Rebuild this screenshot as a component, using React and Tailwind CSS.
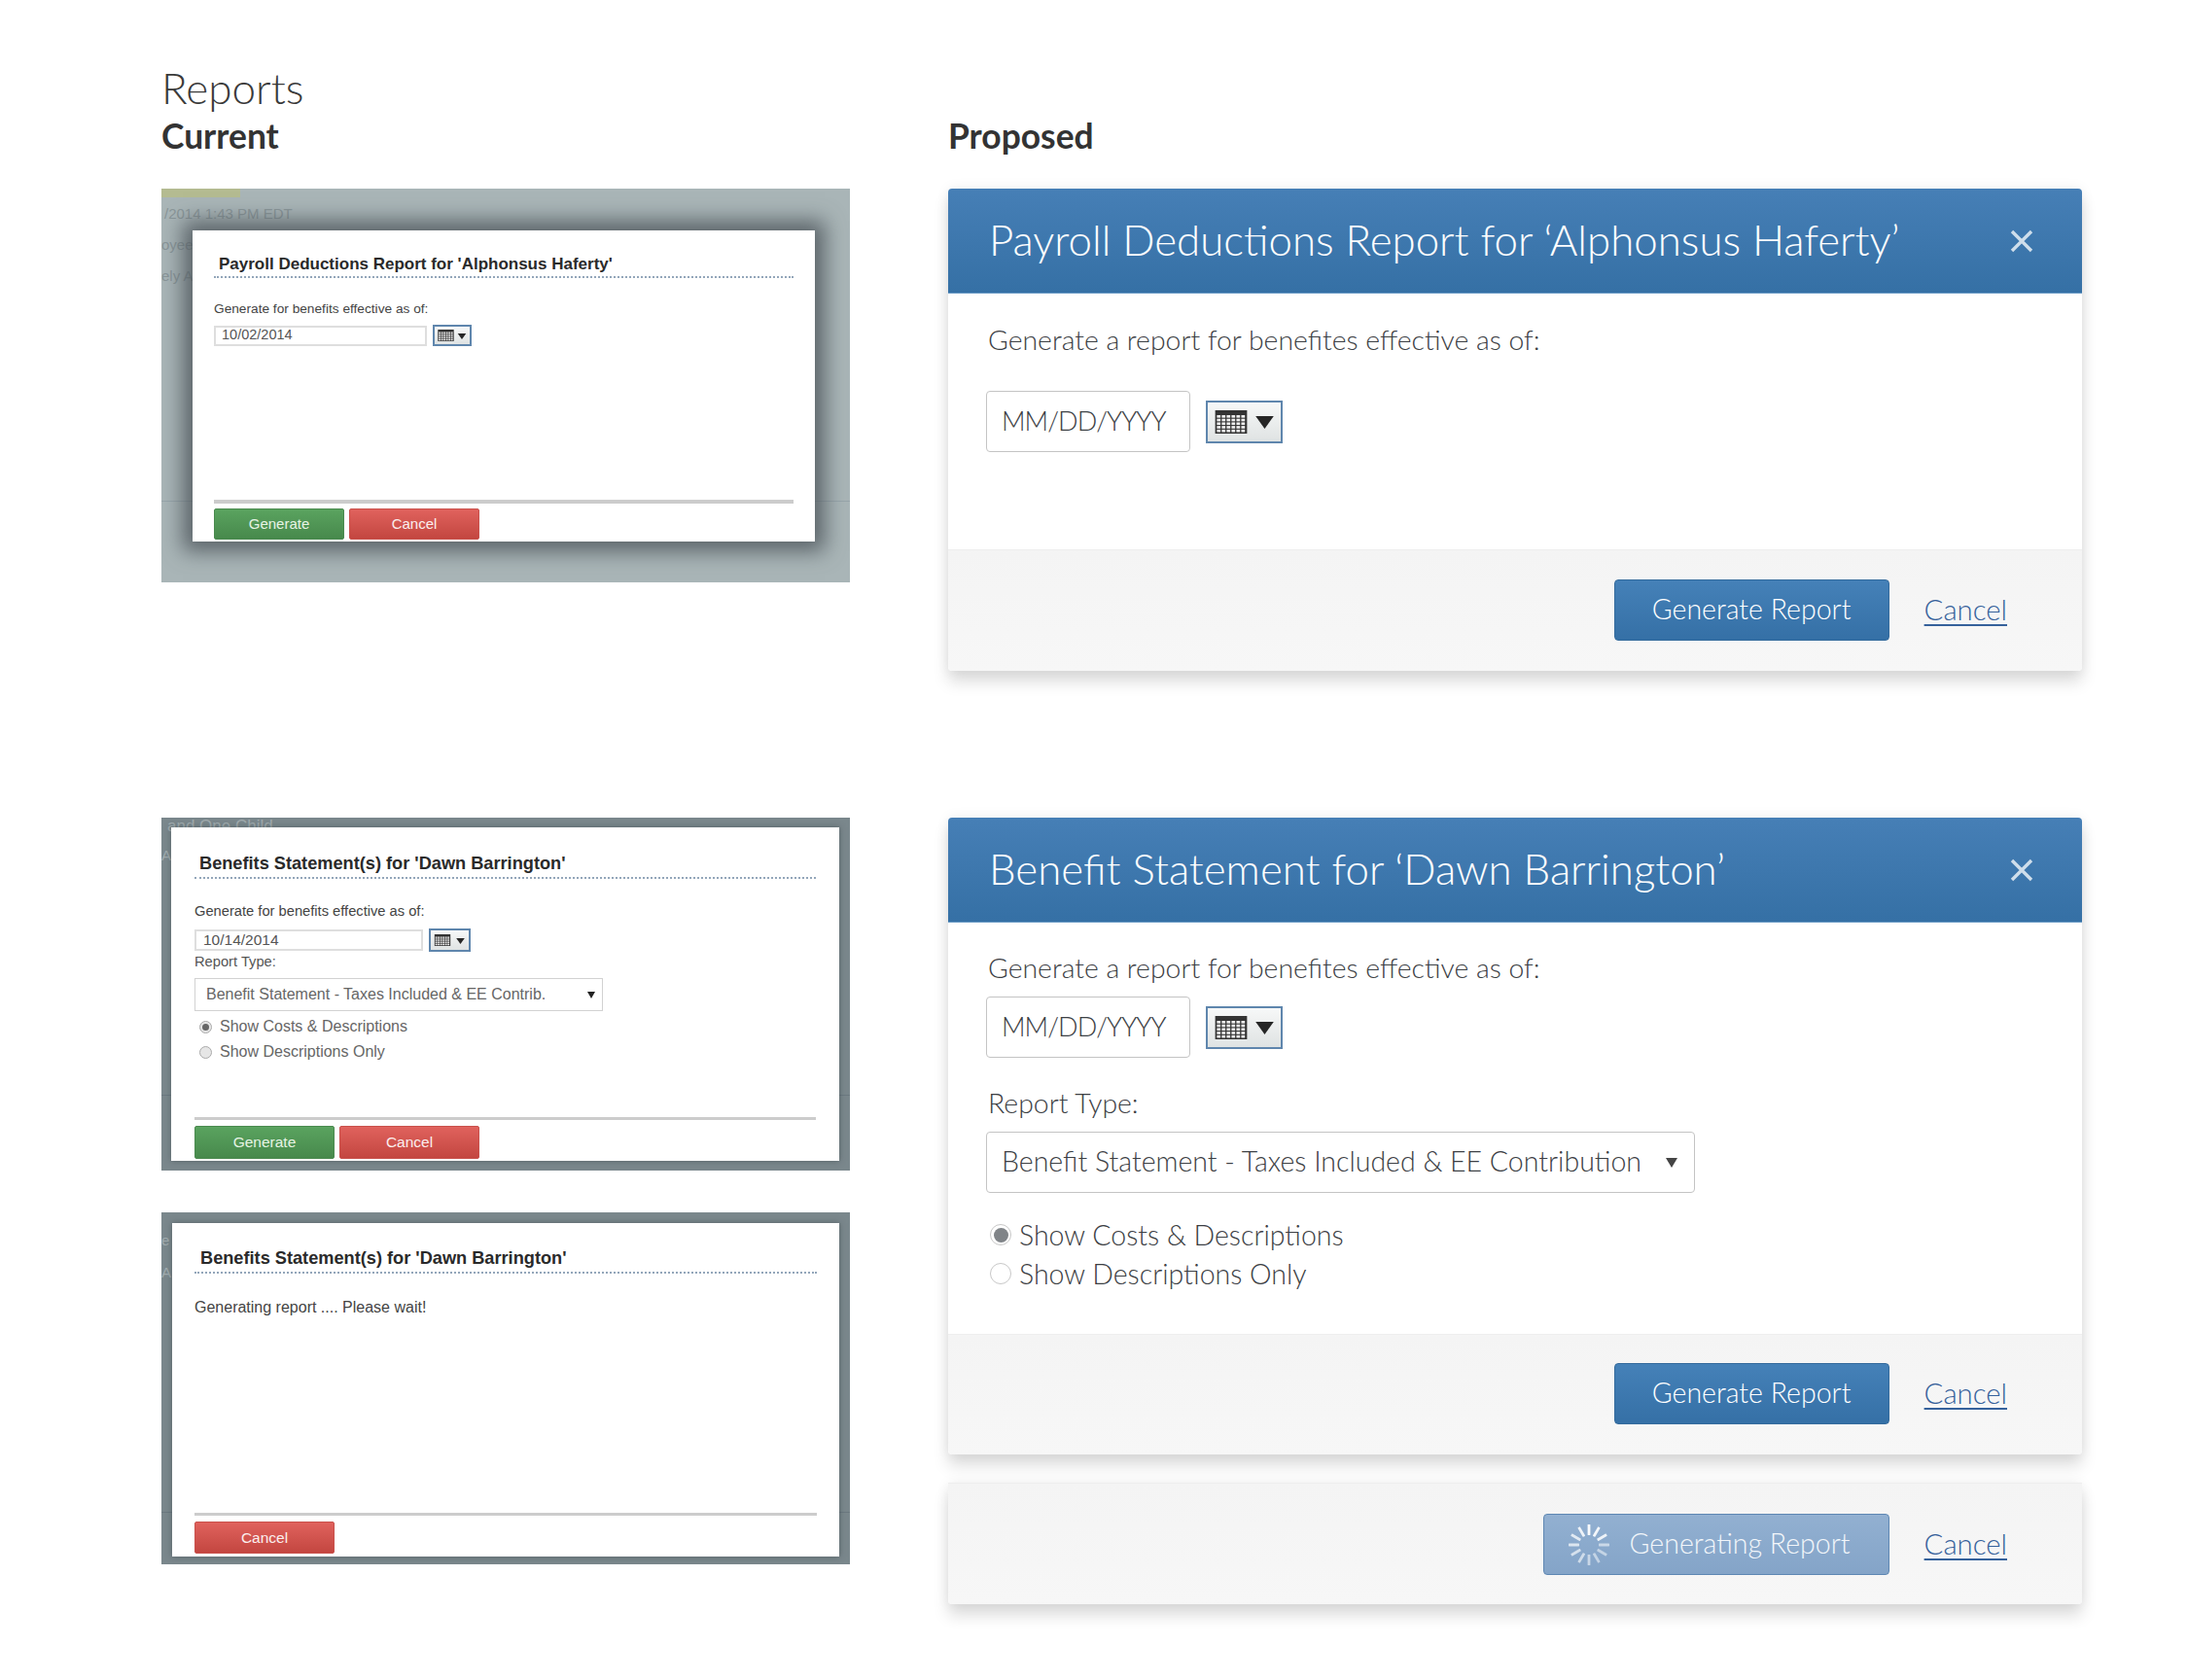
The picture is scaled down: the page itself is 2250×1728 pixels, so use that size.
import React from "react";

const lato = "font-['Lato',sans-serif] font-light";
const arial = "font-['Liberation_Sans',Arial,sans-serif]";

function CalIcon({ w = 30, h = 22 }) {
  const cells = [];
  for (let r = 0; r < 5; r++) {
    for (let c = 0; c < 6; c++) {
      cells.push(<rect key={r + "-" + c} x={1.6 + c * 4.6} y={4.6 + r * 3.4} width={3.4} height={2.4} fill="#f0f0f0" />);
    }
  }
  return (
    <svg width={w} height={h} viewBox="0 0 30 22" className="block">
      <rect x="0" y="0" width="30" height="22" fill="#333" />
      {cells}
    </svg>
  );
}

function CalButton({ className, iconW, iconH, triW, triH, gap }) {
  return (
    <div className={"flex items-center justify-center border-2 border-[#5f86ad] bg-gradient-to-b from-[#f7f8f8] to-[#dfe3e3] " + className} style={{ gap }}>
      <CalIcon w={iconW} h={iconH} />
      <svg width={triW} height={triH} viewBox="0 0 10 7" className="mt-[2px] block">
        <path d="M0 0H10L5 7Z" fill="#262626" />
      </svg>
    </div>
  );
}

function OldButton({ color, w, h, size, children }) {
  const c =
    color === "green"
      ? "from-[#5aa35f] to-[#47894c] border-[#4a8a4f] text-[#e6f3e4]"
      : "from-[#e0625d] to-[#c34640] border-[#c9504b] text-[#fbeeee]";
  return (
    <div className={"flex items-center justify-center rounded-[2px] border bg-gradient-to-b " + c + " " + w + " " + h + " " + size}>{children}</div>
  );
}

function Radio({ checked, old }) {
  if (old) {
    return (
      <span className="flex h-[13px] w-[13px] items-center justify-center rounded-full border border-[#aaa] bg-[#e6e6e6]">
        {checked && <span className="h-[7px] w-[7px] rounded-full bg-[#666]" />}
      </span>
    );
  }
  return (
    <span className="flex h-[22px] w-[22px] items-center justify-center rounded-full border border-[#c8c8c8] bg-white">
      {checked && <span className="h-[15px] w-[15px] rounded-full bg-[#808488]" />}
    </span>
  );
}

function Footer({ spinner, cls }) {
  return (
    <div className={"flex items-start justify-end gap-[36px] rounded-b-[4px] border-t border-[#eeeeee] bg-gradient-to-b from-[#f4f4f4] to-[#f7f7f7] pr-[77px] " + cls}>
      {spinner ? (
        <div className="flex h-[63px] w-[356px] items-center rounded-[4px] border border-[#5e87b3] bg-gradient-to-b from-[#92b0d1] to-[#84a4c8] pl-[24px]">
          <svg width="44" height="44" viewBox="-22 -22 44 44" className="block">
            {Array.from({ length: 12 }).map((_, i) => (
              <rect key={i} x="-1.4" y="-21" width="2.8" height="11" rx="0.6" fill="#fff" opacity={[0.95, 0.9, 0.85, 0.55, 0.5, 0.5, 0.55, 0.6, 0.65, 0.7, 0.75, 0.85][i]} transform={"rotate(" + i * 30 + ")"} />
            ))}
          </svg>
          <span className={lato + " mb-[2px] ml-[20px] whitespace-nowrap text-[28.5px] text-[#f2f6fa]"}>Generating Report</span>
        </div>
      ) : (
        <div className="flex h-[63px] w-[283px] items-center justify-center rounded-[4px] border border-[#336a9c] bg-gradient-to-b from-[#4581b8] to-[#3570a6]">
          <span className={lato + " mb-[2px] whitespace-nowrap text-[28.5px] text-white"}>Generate Report</span>
        </div>
      )}
      <span className={lato + " flex h-[61px] items-center text-[29.3px] text-[#35619b] underline underline-offset-[4px]"}>Cancel</span>
    </div>
  );
}

function DialogHeader({ title }) {
  return (
    <div className="flex h-[108px] items-center justify-between rounded-t-[4px] border-b border-[#6c9cc6] bg-gradient-to-b from-[#467fb6] to-[#3570a5] pl-[42px] pr-[50px]">
      <span className={lato + " mb-[1px] whitespace-nowrap text-[43.8px] text-white"}>{title}</span>
      <svg width="24" height="24" viewBox="0 0 24 24" className="block">
        <path d="M2 2L22 22M22 2L2 22" stroke="#cfdeeb" strokeWidth="3.4" />
      </svg>
    </div>
  );
}

const cardShadow = "shadow-[0_12px_16px_rgba(0,0,0,0.13),0_0_14px_rgba(0,0,0,0.07)]";

function DateInput() {
  return (
    <div className={lato + " flex h-[63px] w-[210px] items-center rounded-[4px] border border-[#c4c4c4] bg-white pl-[15px] text-[27px] tracking-[-0.9px] text-[#3c4044]"}>MM/DD/YYYY</div>
  );
}

function FadedText({ className, children }) {
  return <span className={arial + " absolute whitespace-nowrap " + className}>{children}</span>;
}

function Shot1() {
  return (
    <div className={arial + " relative h-[405px] w-[708px] overflow-hidden bg-[#a9b5b7] pl-[32px] pt-[43px]"}>
      <div className="absolute left-0 top-0 h-[9px] w-[81px] bg-[#b4bb91]" />
      <FadedText className="left-[3px] top-[15px] text-[15px] text-[#8a9699]">/2014 1:43 PM EDT</FadedText>
      <FadedText className="left-0 top-[47px] text-[15px] text-[#8a9699]">oyee</FadedText>
      <FadedText className="left-0 top-[79px] text-[15px] text-[#8a9699]">ely A</FadedText>
      <div className="absolute left-0 right-0 top-[321px] h-px bg-[#97a5ab]" />
      <div className="relative flex h-[320px] w-[640px] flex-col bg-white px-[22px] shadow-[0_0_20px_10px_rgba(72,80,86,0.8)]">
        <div className="h-[49px] border-b-2 border-dotted border-[#93a6ba] pl-[5px] pt-[24px] text-[17px] font-bold leading-[22px] text-[#2a2a2a]">Payroll Deductions Report for 'Alphonsus Haferty'</div>
        <div className="mt-[24px] text-[13.7px] leading-[16px] text-[#444]">Generate for benefits effective as of:</div>
        <div className="mt-[8px] flex items-center gap-[6px]">
          <div className="flex h-[21px] w-[219px] items-center border-2 border-[#dedede] pl-[6px] text-[14.5px] text-[#555]">10/02/2014</div>
          <CalButton className="h-[22px] w-[40px]" iconW={17} iconH={12} triW={10} triH={6} gap={3} />
        </div>
        <div className="mt-auto h-[4px] bg-[#cccccc]" />
        <div className="mb-[2px] mt-[5px] flex gap-[5px]">
          <OldButton color="green" w="w-[134px]" h="h-[32px]" size="text-[15px]">Generate</OldButton>
          <OldButton color="red" w="w-[134px]" h="h-[32px]" size="text-[15px]">Cancel</OldButton>
        </div>
      </div>
    </div>
  );
}

function Shot2() {
  return (
    <div className={arial + " relative h-[363px] w-[708px] overflow-hidden bg-[#7a878c] pl-[10px] pt-[10px]"}>
      <FadedText className="left-[6px] -top-[4px] text-[17px] text-[#a0abae]">and One Child</FadedText>
      <FadedText className="left-0 top-[28px] text-[15px] text-[#a0abae]">A</FadedText>
      <div className="absolute left-0 right-0 top-[285px] h-px bg-[#6b7980]" />
      <div className="relative flex h-[343px] w-[687px] flex-col bg-white px-[24px] shadow-[0_0_6px_rgba(60,70,75,0.6)]">
        <div className="h-[53px] border-b-2 border-dotted border-[#93a6ba] pl-[5px] pt-[26px] text-[18.2px] font-bold leading-[22px] text-[#2a2a2a]">Benefits Statement(s) for 'Dawn Barrington'</div>
        <div className="mt-[25px] text-[14.7px] leading-[16px] text-[#444]">Generate for benefits effective as of:</div>
        <div className="mt-[10px] flex items-center gap-[6px]">
          <div className="flex h-[22px] w-[235px] items-center border-2 border-[#dedede] pl-[7px] text-[15.5px] text-[#555]">10/14/2014</div>
          <CalButton className="h-[24px] w-[43px]" iconW={18} iconH={12} triW={11} triH={6} gap={4} />
        </div>
        <div className="mt-[1px] text-[14.7px] leading-[18px] text-[#555]">Report Type:</div>
        <div className="mt-[8px] flex h-[34px] w-[420px] items-center justify-between border border-[#d2d2d2] pl-[11px] pr-[7px] text-[16px] text-[#666]">
          <span className="whitespace-nowrap">Benefit Statement - Taxes Included &amp; EE Contrib.</span>
          <svg width="8" height="7" viewBox="0 0 8 7" className="block">
            <path d="M0 0H8L4 7Z" fill="#222" />
          </svg>
        </div>
        <div className="mt-[6px] flex h-[20px] items-center gap-[8px] pl-[5px] text-[16px] text-[#666]">
          <Radio checked old />
          <span>Show Costs &amp; Descriptions</span>
        </div>
        <div className="mt-[6px] flex h-[20px] items-center gap-[8px] pl-[5px] text-[16px] text-[#666]">
          <Radio old />
          <span>Show Descriptions Only</span>
        </div>
        <div className="mt-auto h-[3px] bg-[#cccccc]" />
        <div className="mb-[2px] mt-[6px] flex gap-[5px]">
          <OldButton color="green" w="w-[144px]" h="h-[34px]" size="text-[15.5px]">Generate</OldButton>
          <OldButton color="red" w="w-[144px]" h="h-[34px]" size="text-[15.5px]">Cancel</OldButton>
        </div>
      </div>
    </div>
  );
}

function Shot3() {
  return (
    <div className={arial + " relative h-[362px] w-[708px] overflow-hidden bg-[#7a878c] pl-[11px] pt-[11px]"}>
      <FadedText className="left-0 top-[18px] text-[15px] text-[#a0abae]">e</FadedText>
      <FadedText className="left-0 top-[51px] text-[15px] text-[#a0abae]">A</FadedText>
      <div className="absolute left-0 right-0 top-[308px] h-px bg-[#6b7980]" />
      <div className="relative flex h-[343px] w-[686px] flex-col bg-white px-[23px] shadow-[0_0_6px_rgba(60,70,75,0.6)]">
        <div className="h-[52px] border-b-2 border-dotted border-[#93a6ba] pl-[6px] pt-[25px] text-[18.2px] font-bold leading-[22px] text-[#2a2a2a]">Benefits Statement(s) for 'Dawn Barrington'</div>
        <div className="mt-[26px] text-[16px] leading-[18px] text-[#444]">Generating report .... Please wait!</div>
        <div className="mt-auto h-[3px] bg-[#cccccc]" />
        <div className="mb-[3px] mt-[6px] flex gap-[5px]">
          <OldButton color="red" w="w-[144px]" h="h-[33px]" size="text-[15.5px]">Cancel</OldButton>
        </div>
      </div>
    </div>
  );
}

const bodyLabel = lato + " pl-[2px] text-[28.4px] leading-[36px] text-[#3c4044]";

export default function App() {
  return (
    <div className="h-[1728px] w-[2250px] overflow-hidden bg-white pl-[166px] pt-[60px] text-[#333]">
      <div className={lato + " text-[44px] leading-[60px] text-[#3a3a3a]"}>Reports</div>
      <div className="mt-[-6px] flex h-[52px] items-center gap-[101px] font-['Lato',sans-serif] text-[35.4px] font-bold text-[#333]">
        <div className="w-[708px]">Current</div>
        <div>Proposed</div>
      </div>
      <div className="mt-[28px] flex gap-[101px]">
        <Shot1 />
        <div className={"h-[496px] w-[1166px] rounded-[4px] bg-white " + cardShadow}>
          <DialogHeader title="Payroll Deductions Report for ‘Alphonsus Haferty’" />
          <div className="h-[263px] pl-[39px] pt-[29px]">
            <div className={bodyLabel}>Generate a report for benefites effective as of:</div>
            <div className="mt-[35px] flex items-center gap-[16px]">
              <DateInput />
              <CalButton className="h-[44px] w-[79px]" iconW={34} iconH={24} triW={21} triH={13} gap={7} />
            </div>
          </div>
          <Footer cls="h-[125px] pt-[30px]" />
        </div>
      </div>
      <div className="mt-[151px] flex gap-[101px]">
        <div className="flex w-[708px] flex-col gap-[43px]">
          <Shot2 />
          <Shot3 />
        </div>
        <div className="flex w-[1166px] flex-col gap-[29px]">
          <div className={"h-[655px] rounded-[4px] bg-white " + cardShadow}>
            <DialogHeader title="Benefit Statement for ‘Dawn Barrington’" />
            <div className="h-[423px] pl-[39px] pt-[28px]">
              <div className={bodyLabel}>Generate a report for benefites effective as of:</div>
              <div className="mt-[12px] flex items-center gap-[16px]">
                <DateInput />
                <CalButton className="h-[44px] w-[79px]" iconW={34} iconH={24} triW={21} triH={13} gap={7} />
              </div>
              <div className={bodyLabel + " mt-[28px]"}>Report Type:</div>
              <div className={lato + " mt-[12px] flex h-[63px] w-[729px] items-center justify-between rounded-[4px] border border-[#c4c4c4] pl-[15px] pr-[17px] text-[28.5px] text-[#3c4044]"}>
                <span className="mb-[2px] whitespace-nowrap">Benefit Statement - Taxes Included &amp; EE Contribution</span>
                <svg width="12" height="10" viewBox="0 0 12 10" className="block">
                  <path d="M0 0H12L6 10Z" fill="#444" />
                </svg>
              </div>
              <div className={lato + " mt-[23px] flex h-[40px] items-center gap-[8px] pl-[4px] text-[28.5px] text-[#3c4044]"}>
                <Radio checked />
                <span>Show Costs &amp; Descriptions</span>
              </div>
              <div className={lato + " flex h-[40px] items-center gap-[8px] pl-[4px] text-[28.5px] text-[#3c4044]"}>
                <Radio />
                <span>Show Descriptions Only</span>
              </div>
            </div>
            <Footer cls="h-[124px] pt-[29px]" />
          </div>
          <div className={"rounded-[4px] " + cardShadow}>
            <Footer spinner cls="h-[125px] pt-[31px]" />
          </div>
        </div>
      </div>
    </div>
  );
}
